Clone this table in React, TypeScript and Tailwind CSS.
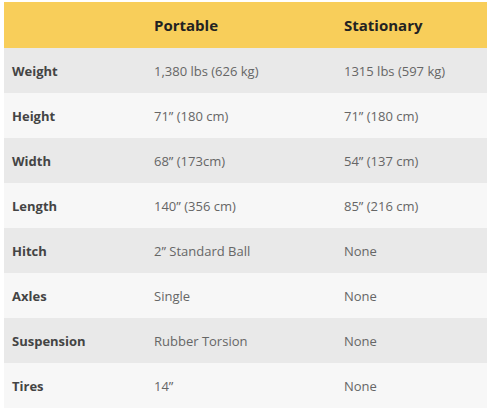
import React from "react";

const rows: [string, string, string][] = [
  ["Weight", "1,380 lbs (626 kg)", "1315 lbs (597 kg)"],
  ["Height", "71\u201D (180 cm)", "71\u201D (180 cm)"],
  ["Width", "68\u201D (173cm)", "54\u201D (137 cm)"],
  ["Length", "140\u201D (356 cm)", "85\u201D (216 cm)"],
  ["Hitch", "2\u201D Standard Ball", "None"],
  ["Axles", "Single", "None"],
  ["Suspension", "Rubber Torsion", "None"],
  ["Tires", "14\u201D", "None"],
];

export default function App() {
  return (
    <div className="w-[489px] h-[409px] bg-white pt-[2px] pl-[4px] overflow-hidden" style={{ fontFamily: '"Open Sans", "Liberation Sans", sans-serif' }}>
      <div className="w-[483px]">
        <div className="grid grid-cols-[142px_190px_1fr] h-[46px] items-center bg-[#f8ce5a] text-[15px] font-bold text-[#222]">
          <div className="pl-2"></div>
          <div className="pl-2">Portable</div>
          <div className="pl-2">Stationary</div>
        </div>
        {rows.map((r, i) => (
          <div
            key={r[0]}
            className={
              "grid grid-cols-[142px_190px_1fr] h-[45px] pt-[2px] items-center text-[13px] " +
              (i % 2 === 0 ? "bg-[#e9e9e9]" : "bg-[#f7f7f7]")
            }
          >
            <div className="pl-2 font-bold text-[#444]">{r[0]}</div>
            <div className="pl-2 text-[#666]">{r[1]}</div>
            <div className="pl-2 text-[#666]">{r[2]}</div>
          </div>
        ))}
      </div>
    </div>
  );
}
